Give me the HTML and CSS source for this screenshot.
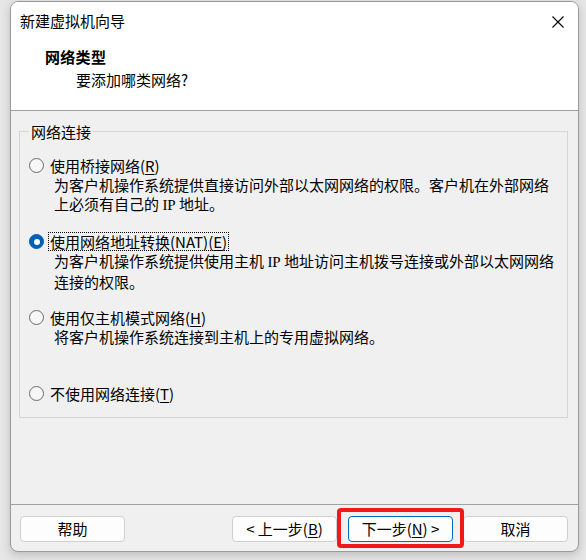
FILE: index.html
```html
<!DOCTYPE html>
<html lang="zh-CN">
<head>
<meta charset="utf-8">
<title>新建虚拟机向导</title>
<link rel="stylesheet" href="styles.css">
</head>
<body>
<div class="window">
  <div class="header">
    <div class="titlebar">
      <span class="title">新建虚拟机向导</span>
      <svg class="close" width="12" height="12" viewBox="0 0 12 12"><path d="M0.5 0.5 L11.5 11.5 M11.5 0.5 L0.5 11.5" stroke="#000" stroke-width="1.1" fill="none"/></svg>
    </div>
    <div class="heading">网络类型</div>
    <div class="subheading">要添加哪类网络?</div>
  </div>
  <div class="content">
    <fieldset class="group">
      <legend>网络连接</legend>
      <div class="options">
        <div class="option">
          <div class="opt-row"><span class="radio"></span><span class="label">使用桥接网络(<u>R</u>)</span></div>
          <div class="desc">为客户机操作系统提供直接访问外部以太网网络的权限。客户机在外部网络<br>上必须有自己的 <span class="lat">IP</span> 地址。</div>
        </div>
        <div class="option">
          <div class="opt-row"><span class="radio checked"></span><span class="label focus">使用网络地址转换(NAT)(<u>E</u>)</span></div>
          <div class="desc">为客户机操作系统提供使用主机 <span class="lat">IP</span> 地址访问主机拨号连接或外部以太网网络<br>连接的权限。</div>
        </div>
        <div class="option">
          <div class="opt-row"><span class="radio"></span><span class="label">使用仅主机模式网络(<u>H</u>)</span></div>
          <div class="desc">将客户机操作系统连接到主机上的专用虚拟网络。</div>
        </div>
        <div class="option last">
          <div class="opt-row"><span class="radio"></span><span class="label">不使用网络连接(<u>T</u>)</span></div>
        </div>
      </div>
    </fieldset>
  </div>
  <div class="footer">
    <button class="btn">帮助</button>
    <button class="btn back">&lt; 上一步(<u>B</u>)</button>
    <button class="btn primary">下一步(<u>N</u>) &gt;</button>
    <button class="btn">取消</button>
  </div>
</div>
</body>
</html>
```
FILE: styles.css
```css
* { box-sizing: border-box; }
html, body {
  margin: 0;
  padding: 0;
}
body {
  width: 586px;
  height: 560px;
  background: #e6e6e6;
  font-family: "Noto Sans CJK SC", "Noto Sans", sans-serif;
  font-size: 15px;
  color: #000;
  padding: 1px 0 0 10px;
  overflow: hidden;
}
.window {
  width: 569px;
  height: 551px;
  border: 1px solid #9a9a9a;
  border-radius: 8px;
  background: #f0f0f0;
  display: flex;
  flex-direction: column;
  overflow: hidden;
  box-shadow: 0 3px 10px rgba(0,0,0,0.18);
}
.header {
  background: #fff;
  height: 109px;
  border-bottom: 1px solid #a0a0a0;
  flex: none;
}
.titlebar {
  height: 38px;
  display: flex;
  align-items: center;
  padding: 0 14px 0 9px;
  justify-content: space-between;
  line-height: 20px;
}
.close { margin-top: 2px; }
.heading {
  margin-top: 7px;
  padding-left: 34px;
  font-weight: bold;
  line-height: 20px;
  letter-spacing: 0.3px;
}
.subheading {
  margin-top: 3px;
  padding-left: 65px;
  line-height: 20px;
}
.content {
  flex: 1;
  padding: 11px 10px 0 8px;
}
.group {
  margin: 0;
  border: 1px solid #d5d5d5;
  padding: 15px 0 14px 9px;
  min-width: 0;
}
.group legend {
  padding: 0 2px;
  margin-left: 0;
  line-height: 19px;
}
.options {
  display: flex;
  flex-direction: column;
}
.option { min-height: 76px; }
.option.last { min-height: 0; }
.opt-row {
  display: flex;
  align-items: center;
  height: 19px;
}
.radio {
  width: 15px;
  height: 15px;
  border-radius: 50%;
  border: 1px solid #6a6a6a;
  background: #f7f7f7;
  flex: none;
  margin-right: 4px;
  position: relative;
}
.radio.checked {
  border-color: #005fb8;
  background: #005fb8;
}
.radio.checked::after {
  content: "";
  position: absolute;
  left: 3.5px;
  top: 3.5px;
  width: 6px;
  height: 6px;
  border-radius: 50%;
  background: #fff;
}
.label {
  border: 1px dotted transparent;
  padding: 0 1px;
  line-height: 17px;
  white-space: nowrap;
}
.label.focus { border-color: #000; }
.desc {
  padding-left: 25px;
  line-height: 19px;
  white-space: nowrap;
}
.lat { font-family: "Liberation Serif", serif; }
u { text-underline-offset: 2px; }
.footer {
  flex: none;
  height: 47px;
  border-top: 1px solid #a0a0a0;
  display: flex;
  align-items: flex-start;
  padding: 11px 10px 0 9px;
  gap: 10px;
}
.btn {
  width: 105px;
  height: 26px;
  border: 1px solid #d0d0d0;
  border-radius: 4px;
  background: #fdfdfd;
  font-family: inherit;
  font-size: 15px;
  color: #000;
  padding: 0;
  line-height: 20px;
  white-space: nowrap;
}
.btn.back { margin-left: auto; }
.btn.primary {
  border-color: #0067c0;
  position: relative;
  margin-left: 1px;
}
.btn.primary::after {
  content: "";
  position: absolute;
  left: -12px;
  right: -12px;
  top: -9px;
  bottom: -7px;
  border: 4px solid #f01818;
  border-radius: 4px;
}
```
